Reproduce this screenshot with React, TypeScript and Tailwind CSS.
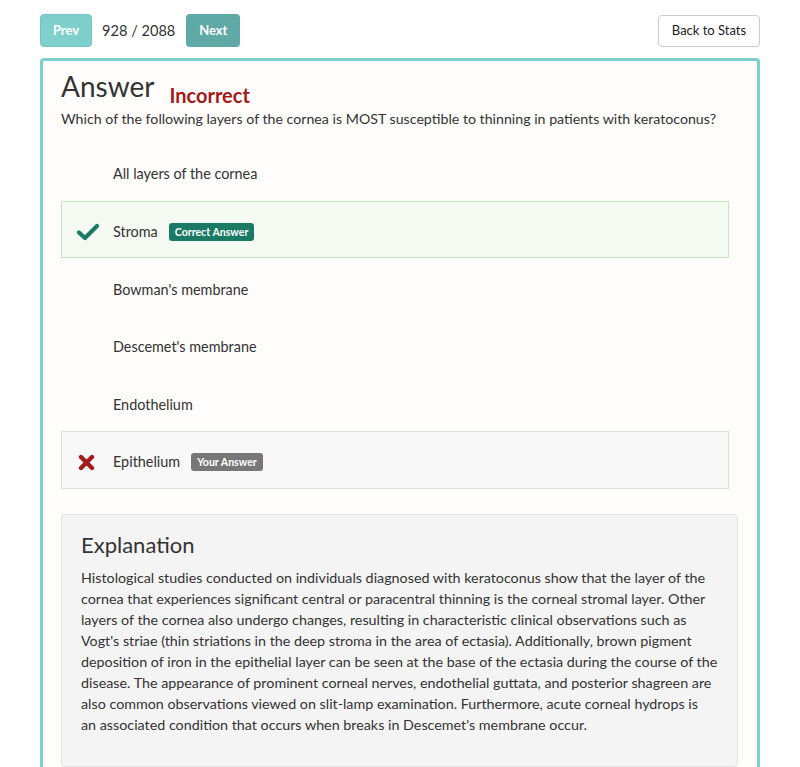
import React from "react";

const options = [
  { text: "All layers of the cornea", kind: "none" },
  { text: "Stroma", kind: "correct" },
  { text: "Bowman's membrane", kind: "none" },
  { text: "Descemet's membrane", kind: "none" },
  { text: "Endothelium", kind: "none" },
  { text: "Epithelium", kind: "wrong" },
];

function Check() {
  return (
    <svg width="22" height="18" viewBox="0 0 22 18">
      <path d="M2 9.5 L8 15 L20 3" fill="none" stroke="#1a7a64" strokeWidth="4.2" strokeLinecap="round" strokeLinejoin="round" />
    </svg>
  );
}

function Cross() {
  return (
    <svg width="17" height="17" viewBox="0 0 17 17">
      <path d="M3 3 L14 14 M14 3 L3 14" fill="none" stroke="#a31a1a" strokeWidth="4.4" strokeLinecap="round" />
    </svg>
  );
}

export default function App() {
  return (
    <div className="min-h-[767px] bg-white text-[#333] font-['Lato',_'Liberation_Sans',_sans-serif] overflow-hidden">
      <div className="flex items-center justify-between pl-[40px] pr-[40px] pt-[14px]">
        <div className="flex items-center">
          <button className="h-[33px] w-[52px] rounded-[4px] bg-[#7fcfcc] border border-[#74c3c0] text-white text-[13px] font-bold">Prev</button>
          <span className="ml-[10px] mr-[11px] text-[14.6px] text-[#333]">928 / 2088</span>
          <button className="h-[33px] w-[54px] rounded-[4px] bg-[#5fa9a6] text-white text-[13px] font-bold">Next</button>
        </div>
        <button className="h-[32px] w-[102px] rounded-[4px] bg-white border border-[#ccc] text-[13px] text-[#222] mt-[1px]">Back to Stats</button>
      </div>
      <div className="mx-[40px] mt-[11px] h-[800px] border-[3px] border-[#7ccfcb] rounded-t-[4px] bg-[#fefdfb] pl-[18px] pr-[19px]">
        <div className="flex items-end pt-[8px]">
          <h1 className="text-[28px] leading-[34px] text-[#333]">Answer</h1>
          <span className="ml-[15px] text-[20px] font-bold text-[#a31a1a] leading-[24px] mb-[-4px]">Incorrect</span>
        </div>
        <p className="text-[14.2px] leading-[20px] mt-[6px]">Which of the following layers of the cornea is MOST susceptible to thinning in patients with keratoconus?</p>
        <div className="mt-[14px] mr-[9px]">
          {options.map((o) => {
            const box =
              o.kind === "correct"
                ? "bg-[#f5fbf3] border-[#c6e4bf]"
                : o.kind === "wrong"
                ? "bg-[#f8f8f8] border-[#ddd]"
                : "border-transparent";
            return (
              <div key={o.text} className={`h-[57.6px] border flex items-center pt-[5px] ${box}`}>
                <div className="w-[51px] flex justify-center pl-[1px]">
                  {o.kind === "correct" && <Check />}
                  {o.kind === "wrong" && (
                    <span className="mr-[4px] flex">
                      <Cross />
                    </span>
                  )}
                </div>
                <span className="text-[14.4px] text-[#333]">{o.text}</span>
                {o.kind === "correct" && (
                  <span className="ml-[11px] rounded-[3px] bg-[#1a7a64] text-white text-[10.6px] font-bold px-[6px] h-[18px] leading-[18px]">Correct Answer</span>
                )}
                {o.kind === "wrong" && (
                  <span className="ml-[11px] rounded-[3px] bg-[#777] text-white text-[10.6px] font-bold px-[6px] h-[18px] leading-[18px]">Your Answer</span>
                )}
              </div>
            );
          })}
        </div>
        <div className="mt-[25px] rounded-[4px] border border-[#e3e3e3] bg-[#f4f4f4] pl-[19px] pr-[14px] pt-[16px] pb-[31px]">
          <h2 className="text-[22px] leading-[28px] text-[#333]">Explanation</h2>
          <p className="mt-[8px] text-[14.3px] leading-[21px] text-[#333]">
            Histological studies conducted on individuals diagnosed with keratoconus show that the layer of the cornea that experiences significant central or paracentral thinning is the corneal stromal layer. Other layers of the cornea also undergo changes, resulting in characteristic clinical observations such as Vogt's striae (thin striations in the deep stroma in the area of ectasia). Additionally, brown pigment deposition of iron in the epithelial layer can be seen at the base of the ectasia during the course of the disease. The appearance of prominent corneal nerves, endothelial guttata, and posterior shagreen are also common observations viewed on slit-lamp examination. Furthermore, acute corneal hydrops is
            <br />
            an associated condition that occurs when breaks in Descemet's membrane occur.
          </p>
        </div>
      </div>
    </div>
  );
}
